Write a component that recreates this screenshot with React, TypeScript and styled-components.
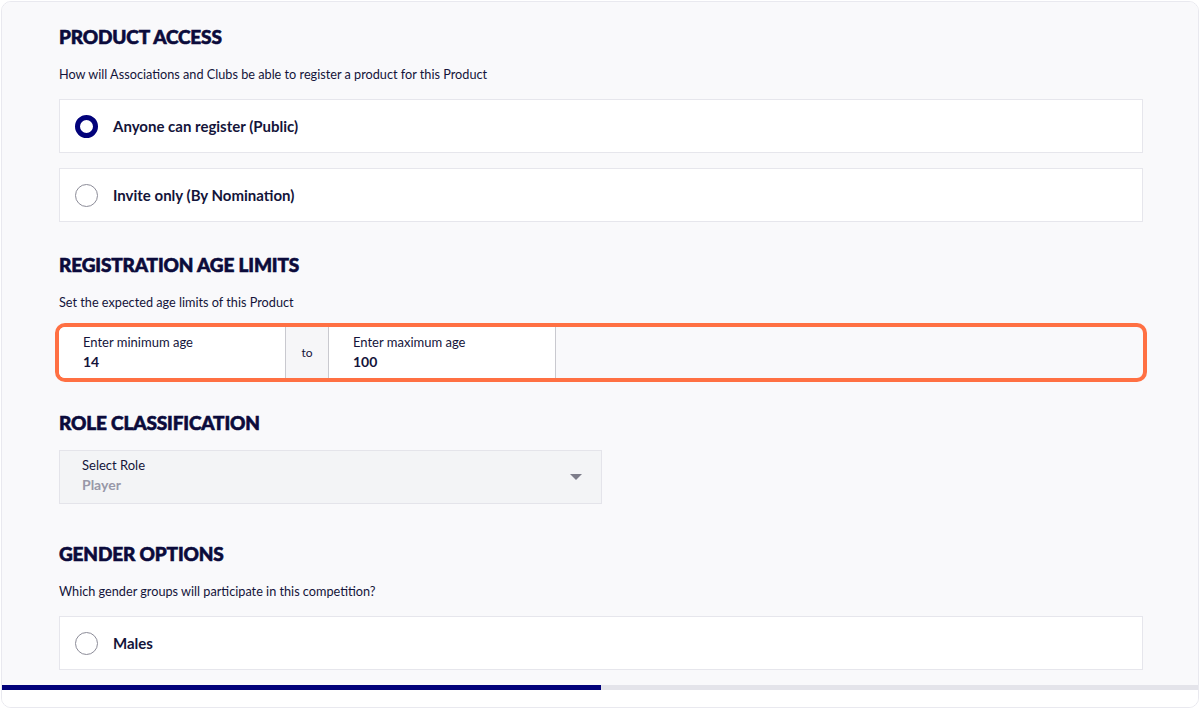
import React from "react";
import styled, { createGlobalStyle } from "styled-components";

const GlobalStyle = createGlobalStyle`
  html, body {
    margin: 0;
    padding: 0;
    background: #ffffff;
  }
  body {
    font-family: Lato, "Noto Sans", sans-serif;
    color: #14143a;
  }
  * {
    box-sizing: border-box;
  }
`;

const Frame = styled.div`
  margin: 1px;
  height: 707px;
  border: 1px solid #e9e9ef;
  border-radius: 10px;
  overflow: hidden;
  display: flex;
  flex-direction: column;
  background: #ffffff;
`;

const Scroll = styled.div`
  flex: 1;
  overflow: hidden;
  background: #f9f9fb;
  padding: 23px 55px 0 57px;
`;

const Section = styled.section<{ $gap?: number }>`
  margin-bottom: ${(p) => p.$gap ?? 31}px;
`;

const Heading = styled.h2<{ $tight?: boolean }>`
  margin: 0 0 ${(p) => (p.$tight ? "15px" : "17px")};
  font-family: Lato, sans-serif;
  font-weight: 900;
  font-size: 19px;
  letter-spacing: -0.15px;
  line-height: 24px;
  color: #0b0b3b;
  -webkit-text-stroke: 0.6px #0b0b3b;
  text-transform: uppercase;
`;

const Hint = styled.p`
  margin: 0 0 17px;
  font-size: 12.7px;
  line-height: 16px;
  color: #14143a;
`;

const OptionList = styled.div`
  display: flex;
  flex-direction: column;
  gap: 15px;
`;

const OptionCard = styled.label`
  display: flex;
  align-items: center;
  gap: 15px;
  height: 54px;
  padding: 0 15px;
  background: #ffffff;
  border: 1px solid #e6e6ec;
  font-size: 15px;
  font-weight: 700;
  color: #14143a;
  cursor: pointer;
`;

const Radio = styled.span<{ $checked?: boolean }>`
  width: 23px;
  height: 23px;
  border-radius: 50%;
  flex-shrink: 0;
  background: #ffffff;
  border: ${(p) => (p.$checked ? "5px solid #02027a" : "1px solid #8c8c98")};
`;

const Highlight = styled.div`
  margin: -4px;
  border: 4px solid #ff7043;
  border-radius: 10px;
  overflow: hidden;
  display: flex;
  height: 59px;
  background: #f9f9fb;
`;

const AgeField = styled.div`
  width: 227px;
  background: #ffffff;
  padding: 7px 24px 0;
  display: flex;
  flex-direction: column;
  border-right: 1px solid #c9c9cf;
`;

const FieldLabel = styled.span`
  font-size: 13px;
  line-height: 17px;
  color: #14143a;
`;

const FieldValue = styled.span<{ $muted?: boolean }>`
  font-size: 14px;
  line-height: 21px;
  font-weight: 700;
  color: ${(p) => (p.$muted ? "#9898a8" : "#14143a")};
`;

const Joiner = styled.div`
  width: 43px;
  display: flex;
  align-items: center;
  justify-content: center;
  background: #f6f6f8;
  border-right: 1px solid #c9c9cf;
  font-size: 12px;
  color: #14143a;
`;

const Select = styled.div`
  width: 543px;
  height: 54px;
  background: #f3f4f6;
  border: 1px solid #e4e4ea;
  padding: 6px 22px 0;
  display: flex;
  align-items: center;
  justify-content: space-between;
`;

const SelectText = styled.div`
  display: flex;
  flex-direction: column;
  align-self: flex-start;
`;

const Caret = styled.span`
  width: 0;
  height: 0;
  margin-right: -3px;
  margin-top: -6px;
  border-left: 6px solid transparent;
  border-right: 6px solid transparent;
  border-top: 6px solid #7d7d8a;
`;

const Progress = styled.div`
  height: 5px;
  background: #e4e4ea;
  flex-shrink: 0;
`;

const ProgressFill = styled.div`
  height: 100%;
  background: #02027a;
`;

const Footer = styled.div`
  height: 17px;
  background: #ffffff;
  flex-shrink: 0;
`;

const access = [
  { label: "Anyone can register (Public)", checked: true },
  { label: "Invite only (By Nomination)", checked: false },
];

export default function App() {
  const progress = 50.1;
  return (
    <>
      <GlobalStyle />
      <Frame>
        <Scroll>
          <Section>
            <Heading>Product Access</Heading>
            <Hint>How will Associations and Clubs be able to register a product for this Product</Hint>
            <OptionList>
              {access.map((o) => (
                <OptionCard key={o.label}>
                  <Radio $checked={o.checked} />
                  {o.label}
                </OptionCard>
              ))}
            </OptionList>
          </Section>

          <Section $gap={33}>
            <Heading>Registration Age Limits</Heading>
            <Hint>Set the expected age limits of this Product</Hint>
            <Highlight>
              <AgeField>
                <FieldLabel>Enter minimum age</FieldLabel>
                <FieldValue>14</FieldValue>
              </AgeField>
              <Joiner>to</Joiner>
              <AgeField>
                <FieldLabel>Enter maximum age</FieldLabel>
                <FieldValue>100</FieldValue>
              </AgeField>
            </Highlight>
          </Section>

          <Section $gap={38}>
            <Heading $tight>Role Classification</Heading>
            <Select>
              <SelectText>
                <FieldLabel>Select Role</FieldLabel>
                <FieldValue $muted>Player</FieldValue>
              </SelectText>
              <Caret />
            </Select>
          </Section>

          <Section>
            <Heading>Gender Options</Heading>
            <Hint>Which gender groups will participate in this competition?</Hint>
            <OptionList>
              <OptionCard>
                <Radio />
                Males
              </OptionCard>
            </OptionList>
          </Section>
        </Scroll>
        <Progress>
          <ProgressFill style={{ width: `${progress}%` }} />
        </Progress>
        <Footer />
      </Frame>
    </>
  );
}
